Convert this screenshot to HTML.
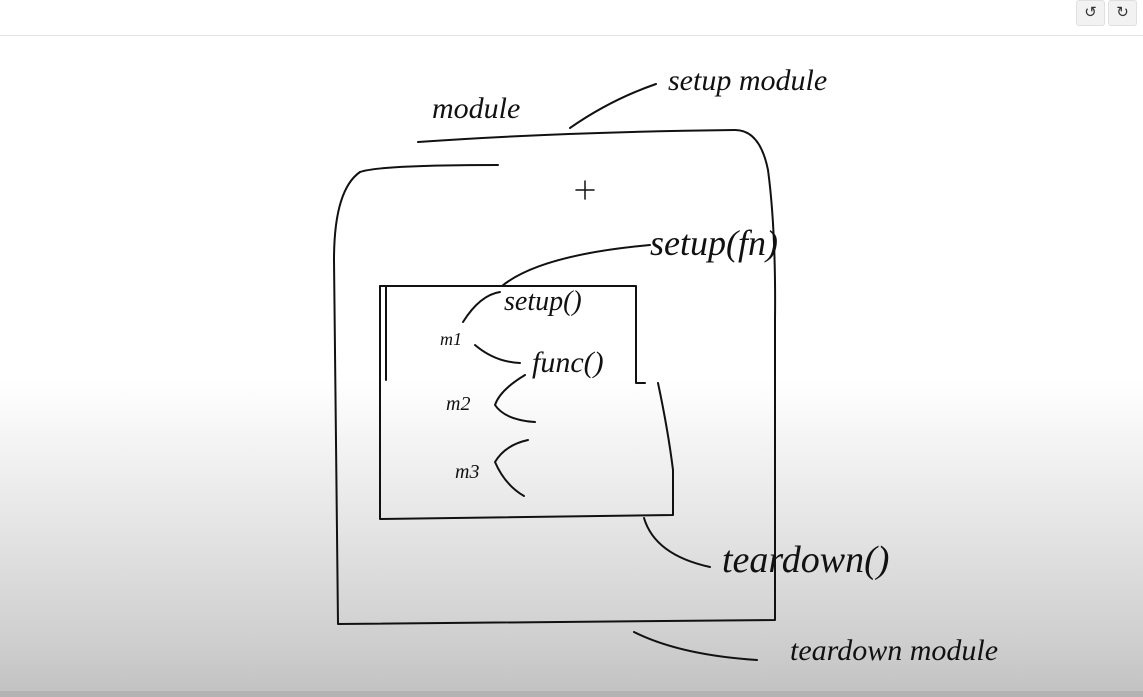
<!DOCTYPE html>
<html><head><meta charset="utf-8"><style>
html,body{margin:0;padding:0;width:1143px;height:697px;overflow:hidden;font-family:"Liberation Sans",sans-serif}
.bg{position:absolute;left:0;top:0;width:1143px;height:697px;background:linear-gradient(to bottom,#fff 0px,#fff 380px,#e6e6e6 520px,#cfcfcf 640px,#c3c3c3 690px);}
.bar{position:absolute;left:0;top:0;width:1143px;height:35px;background:#fff;border-bottom:1px solid #e4e4e4}
.btn{position:absolute;top:0;width:27px;height:24px;background:#f2f2f2;border:1px solid #e0e0e0;border-radius:3px;font-size:15px;color:#333;text-align:center;line-height:23px}
.bot{position:absolute;left:0;top:691px;width:1143px;height:6px;background:#b3b3b3}
svg{position:absolute;left:0;top:0}
text{font-family:"Liberation Serif",serif;font-style:italic;fill:#111}
</style></head><body>
<div class="bg"></div>
<div class="bar"></div>
<div class="btn" style="left:1076px">&#x21BA;</div>
<div class="btn" style="left:1108px">&#x21BB;</div>
<div class="bot"></div>
<svg width="1143" height="697" viewBox="0 0 1143 697" fill="none" stroke="#111" stroke-width="2" stroke-linecap="round" stroke-linejoin="round">
<!-- outer module box -->
<path d="M418 142 Q560 132 735 130 Q760 130 768 170 Q776 230 775 320 L775 620 L338 624 Q336 500 334 260 Q334 190 360 172 Q380 165 498 165"/>
<!-- inner box -->
<path d="M380 286 L636 286 L636 383 L645 383"/>
<path d="M380 286 L380 519 L673 515 L673 470 Q668 430 658 383"/>
<path d="M386 286 L386 380"/>
<!-- connectors -->
<path d="M570 128 Q610 100 656 84"/>
<path d="M502 286 Q540 255 650 245"/>
<path d="M463 322 Q480 295 500 292"/>
<path d="M475 345 Q495 362 520 363"/>
<path d="M525 375 Q500 390 495 405 Q505 420 535 422"/>
<path d="M528 440 Q505 445 495 462 Q505 485 524 496"/>
<path d="M644 518 Q655 555 710 567"/>
<path d="M634 632 Q680 655 757 660"/>
<!-- plus -->
<path d="M585 181 L585 199 M576 190 L594 190" stroke-width="1.5"/>
<!-- labels -->
<g stroke="none">
<text x="432" y="118" font-size="30">module</text>
<text x="668" y="90" font-size="30">setup module</text>
<text x="650" y="255" font-size="36">setup(fn)</text>
<text x="504" y="310" font-size="28">setup()</text>
<text x="440" y="345" font-size="18">m1</text>
<text x="532" y="372" font-size="30">func()</text>
<text x="446" y="410" font-size="20">m2</text>
<text x="455" y="478" font-size="20">m3</text>
<text x="722" y="572" font-size="38">teardown()</text>
<text x="790" y="660" font-size="30">teardown module</text>
</g>
</svg>
</body></html>
